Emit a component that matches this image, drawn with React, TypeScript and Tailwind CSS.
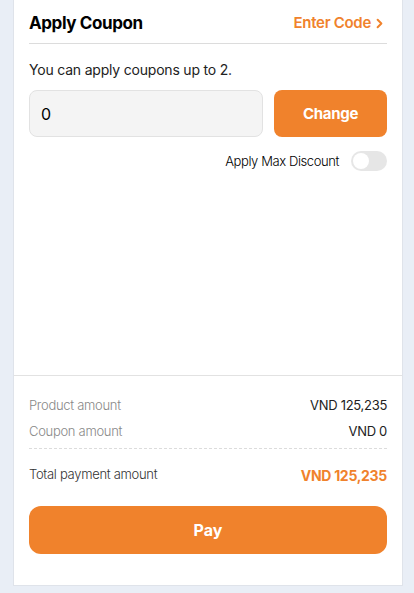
import { ChevronRight } from "lucide-react";

export default function App() {
  return (
    <div
      className="h-[593px] w-[414px] bg-[#e9eef6] pl-[13px] pr-[11px] pb-[7px] text-[#111]"
      style={{ fontFamily: "Inter, 'Noto Sans', sans-serif" }}
    >
      <div className="flex h-full flex-col border-x border-b border-[#dfe3ea] bg-white">
        {/* Coupon section */}
        <div className="flex-1 px-[15px]">
          <div className="flex h-[44px] items-center justify-between border-b border-[#dcdcdc] pt-[4px]">
            <h2 className="text-[17px] font-bold tracking-[-0.4px] text-black">Apply Coupon</h2>
            <button className="flex items-center gap-[1px] text-[15px] font-semibold tracking-[-0.3px] text-[#f0822c]">
              Enter Code
              <ChevronRight size={15} strokeWidth={3.2} />
            </button>
          </div>

          <p className="mt-4 text-[14px] leading-5 tracking-[-0.2px] text-[#222]">You can apply coupons up to 2.</p>

          <div className="mt-[10px] flex gap-[11px]">
            <input
              readOnly
              value="0"
              className="h-[47px] w-[234px] rounded-lg border border-[#e2e2e2] bg-[#f4f4f4] px-[11px] text-[16px] text-black outline-none"
            />
            <button className="h-[47px] flex-1 rounded-lg bg-[#f0822c] pt-[1px] text-[15px] font-bold tracking-[-0.3px] text-white">
              Change
            </button>
          </div>

          <div className="mt-[14px] flex items-center justify-end gap-3">
            <span className="pt-[1px] text-[13px] font-light tracking-[-0.4px] text-black">Apply Max Discount</span>
            <div className="flex h-5 w-9 items-center rounded-full bg-[#e6e6e6] p-[2px]">
              <div className="h-4 w-4 rounded-full bg-white" />
            </div>
          </div>
        </div>

        {/* Summary */}
        <div className="border-t border-[#e2e2e2] px-[15px] pb-[31px] pt-[20px]">
          <div className="space-y-[6px] text-[13px] tracking-[-0.3px]">
            <div className="flex h-5 items-center justify-between">
              <span className="font-light text-[#888]">Product amount</span>
              <span className="text-[#222]">VND 125,235</span>
            </div>
            <div className="flex h-5 items-center justify-between">
              <span className="font-light text-[#888]">Coupon amount</span>
              <span className="text-[#222]">VND 0</span>
            </div>
          </div>
          <div className="mt-[6px] border-t border-dashed border-[#dcdcdc]" />
          <div className="mt-[16px] flex h-5 items-center justify-between text-[13px] tracking-[-0.3px]">
            <span className="font-light text-[#333]">Total payment amount</span>
            <span className="text-[14px] font-bold tracking-[-0.3px] text-[#f0822c]">VND 125,235</span>
          </div>
          <button className="mt-[21px] h-[48px] w-full rounded-xl bg-[#f0822c] text-[16px] font-bold text-white">
            Pay
          </button>
        </div>
      </div>
    </div>
  );
}
